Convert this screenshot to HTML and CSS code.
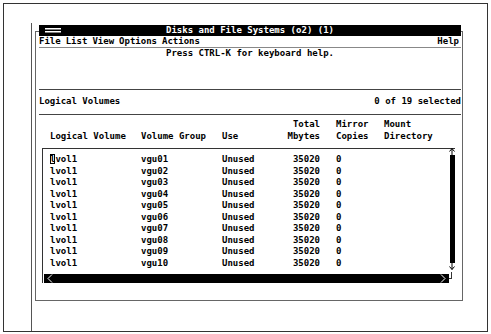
FILE: index.html
```html
<!DOCTYPE html>
<html lang="en">
<head>
    <meta charset="UTF-8">
    <title>Disks and File Systems (o2) (1)</title>
    <link rel="stylesheet" href="styles.css">
</head>
<body>
    <div class="frame">
        <div class="desk">
            <div class="window">
                <div class="titlebar">
                    <svg class="sysmenu" width="16" height="5" viewBox="0 0 16 5">
                        <rect x="0" y="0" width="16" height="1.5" fill="#fff"/>
                        <rect x="0" y="3" width="16" height="1.5" fill="#fff"/>
                    </svg>
                    <span class="title">Disks and File Systems (o2) (1)</span>
                </div>
                <div class="content">
                    <div class="menubar">
                        <span>File</span> <span>List</span> <span>View</span> <span>Options</span> <span>Actions</span>
                        <span class="help">Help</span>
                    </div>
                    <p class="hint">Press CTRL-K for keyboard help.</p>

                    <div class="listhead">
                        <span>Logical Volumes</span>
                        <span>0 of 19 selected</span>
                    </div>

                    <div class="cols heading">
                        <span>Logical Volume</span>
                        <span>Volume Group</span>
                        <span>Use</span>
                        <span class="num">Total<br>Mbytes</span>
                        <span class="mir">Mirror<br>Copies</span>
                        <span>Mount<br>Directory</span>
                    </div>

                    <div class="listbox">
                        <div class="rows">
                            <div class="cols"><span><i class="cursor">l</i>vol1</span><span>vgu01</span><span>Unused</span><span class="num">35020</span><span class="mir">0</span><span></span></div>
                            <div class="cols"><span>lvol1</span><span>vgu02</span><span>Unused</span><span class="num">35020</span><span class="mir">0</span><span></span></div>
                            <div class="cols"><span>lvol1</span><span>vgu03</span><span>Unused</span><span class="num">35020</span><span class="mir">0</span><span></span></div>
                            <div class="cols"><span>lvol1</span><span>vgu04</span><span>Unused</span><span class="num">35020</span><span class="mir">0</span><span></span></div>
                            <div class="cols"><span>lvol1</span><span>vgu05</span><span>Unused</span><span class="num">35020</span><span class="mir">0</span><span></span></div>
                            <div class="cols"><span>lvol1</span><span>vgu06</span><span>Unused</span><span class="num">35020</span><span class="mir">0</span><span></span></div>
                            <div class="cols"><span>lvol1</span><span>vgu07</span><span>Unused</span><span class="num">35020</span><span class="mir">0</span><span></span></div>
                            <div class="cols"><span>lvol1</span><span>vgu08</span><span>Unused</span><span class="num">35020</span><span class="mir">0</span><span></span></div>
                            <div class="cols"><span>lvol1</span><span>vgu09</span><span>Unused</span><span class="num">35020</span><span class="mir">0</span><span></span></div>
                            <div class="cols"><span>lvol1</span><span>vgu10</span><span>Unused</span><span class="num">35020</span><span class="mir">0</span><span></span></div>
                        </div>
                        <div class="vscroll">
                            <svg width="6" height="7" viewBox="0 0 6 7"><path d="M3 0.5 L3 7 M0.5 3.5 L3 0.5 L5.5 3.5" stroke="#000" stroke-width="1" fill="none"/></svg>
                            <div class="track"></div>
                            <svg width="6" height="7" viewBox="0 0 6 7"><path d="M3 0 L3 6.5 M0.5 3.5 L3 6.5 L5.5 3.5" stroke="#000" stroke-width="1" fill="none"/></svg>
                        </div>
                        <div class="hscroll">
                            <svg width="6" height="9" viewBox="0 0 6 9"><path d="M5 0.5 L1 4.5 L5 8.5" stroke="#fff" stroke-width="1" fill="none"/></svg>
                            <svg width="6" height="9" viewBox="0 0 6 9"><path d="M1 0.5 L5 4.5 L1 8.5" stroke="#fff" stroke-width="1" fill="none"/></svg>
                        </div>
                        <div class="corner"></div>
                    </div>
                </div>
            </div>
        </div>
    </div>
</body>
</html>
```

FILE: styles.css
```css
body {
    margin: 0;
    background: #fff;
    color: #000;
    font-family: 'DejaVu Sans Mono', 'Liberation Mono', monospace;
    font-size: 9px;
    font-weight: bold;
}
.frame {
    margin: 3px;
    width: 483px;
    height: 327px;
    border: 1px solid #333;
    display: flex;
}
.desk {
    flex: 1;
    margin: 19px 0 0 27px;
    border-left: 1px solid #555;
}
.window {
    margin: 8px 0 0 3px;
    width: 426px;
    height: 268px;
    border: 1px solid #666;
}
.titlebar {
    margin: -7px 1px 0 3px;
    height: 11px;
    background: #000;
    color: #fff;
    display: flex;
    align-items: center;
    justify-content: center;
    position: relative;
}
.sysmenu {
    position: absolute;
    left: 6px;
    top: 3px;
}
.title {
    line-height: 11px;
}
.content {
    margin: 0 1px 0 3px;
}
.menubar {
    height: 11px;
    line-height: 11px;
    border-bottom: 1px solid #888;
    display: flex;
    gap: 5px;
}
.menubar .help {
    margin-left: auto;
    margin-right: 2px;
}
.hint {
    margin: 0;
    height: 41px;
    line-height: 11px;
    text-align: center;
    border-bottom: 1px solid #444;
}
.listhead {
    display: flex;
    justify-content: space-between;
    padding: 6px 0 7px;
    line-height: 11px;
    border-bottom: 1px solid #444;
}
.cols {
    display: grid;
    grid-template-columns: 91px 81px 48px 50px 64px 1fr;
    line-height: 11.5px;
    white-space: nowrap;
}
.cols .num {
    text-align: right;
}
.cols .mir {
    padding-left: 16px;
}
.heading {
    padding: 4px 0 0 11px;
    align-items: end;
}
.listbox {
    margin: 6px 6px 0 3px;
    border-top: 1px solid #333;
    border-left: 1px solid #333;
    display: grid;
    grid-template-columns: 1fr 6px;
    grid-template-rows: auto 11px;
    height: 134px;
}
.rows {
    padding: 5px 0 0 7px;
}
.cursor {
    font-style: normal;
    outline: 1px solid #000;
    outline-offset: -1px;
}
.vscroll {
    display: flex;
    flex-direction: column;
    align-items: center;
    margin-top: -1px;
    padding-bottom: 2px;
}
.vscroll .track {
    flex: 1;
    width: 5px;
    background: #000;
}
.hscroll {
    margin: 2px 0 0 1px;
    background: #000;
    display: flex;
    justify-content: space-between;
    align-items: center;
    padding: 0 3px;
}
.corner {
    border-right: 1px solid #333;
    border-bottom: 1px solid #333;
    width: 2px;
    height: 6px;
}
```
